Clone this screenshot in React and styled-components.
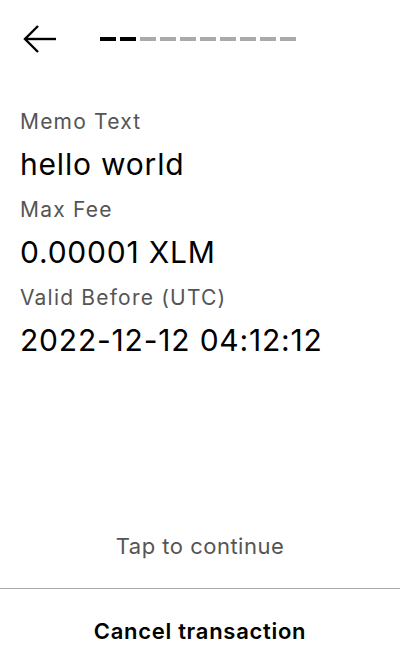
import React from 'react';
import styled, { createGlobalStyle } from 'styled-components';

const GlobalStyle = createGlobalStyle`
  html, body {
    margin: 0;
    padding: 0;
    background: #fff;
  }
  body {
    font-family: Inter, "Liberation Sans", sans-serif;
    color: #000;
  }
`;

const Screen = styled.div`
  height: 672px;
  width: 400px;
  display: flex;
  flex-direction: column;
`;

const Header = styled.div`
  height: 78px;
  display: flex;
  align-items: center;
  padding-left: 22px;
  gap: 42px;
`;

const BackButton = styled.button`
  background: none;
  border: none;
  padding: 0;
  width: 36px;
  height: 30px;
  display: flex;
  align-items: center;
  cursor: pointer;
`;

const Progress = styled.div`
  display: flex;
  gap: 4px;
`;

const Dash = styled.span`
  width: 16px;
  height: 4px;
  background: ${(p) => (p.$done ? '#000' : '#aaa')};
`;

const Fields = styled.div`
  flex: 1;
  padding: 32px 20px 0;
`;

const Label = styled.div`
  font-size: 21px;
  line-height: 24px;
  letter-spacing: 1.2px;
  color: #555;
  margin-bottom: 13px;
`;

const Value = styled.div`
  font-size: 30px;
  line-height: 34px;
  letter-spacing: 0.8px;
  margin-bottom: 17px;
`;

const Hint = styled.div`
  text-align: center;
  font-size: 22px;
  line-height: 26px;
  letter-spacing: 0.5px;
  color: #555;
  margin-bottom: 29px;
`;

const Divider = styled.div`
  height: 1px;
  background: #aaa;
`;

const CancelButton = styled.button`
  height: 83px;
  width: 100%;
  background: none;
  border: none;
  font-family: inherit;
  font-size: 22px;
  font-weight: 600;
  letter-spacing: 0.7px;
  color: #000;
  cursor: pointer;
`;

const fields = [
  ['Memo Text', 'hello world'],
  ['Max Fee', '0.00001 XLM'],
  ['Valid Before (UTC)', '2022-12-12 04:12:12'],
];

export default function App() {
  return (
    <>
      <GlobalStyle />
      <Screen>
        <Header>
          <BackButton aria-label="Back">
            <svg width="36" height="30" viewBox="0 0 36 30" fill="none" stroke="#000" strokeWidth="2.4">
              <path d="M3 15h31" />
              <path d="M16 2L3 15l13 13" />
            </svg>
          </BackButton>
          <Progress>
            {Array.from({ length: 10 }).map((_, i) => (
              <Dash key={i} $done={i < 2} />
            ))}
          </Progress>
        </Header>
        <Fields>
          {fields.map(([label, value]) => (
            <React.Fragment key={label}>
              <Label>{label}</Label>
              <Value>{value}</Value>
            </React.Fragment>
          ))}
        </Fields>
        <Hint>Tap to continue</Hint>
        <Divider />
        <CancelButton>Cancel transaction</CancelButton>
      </Screen>
    </>
  );
}
